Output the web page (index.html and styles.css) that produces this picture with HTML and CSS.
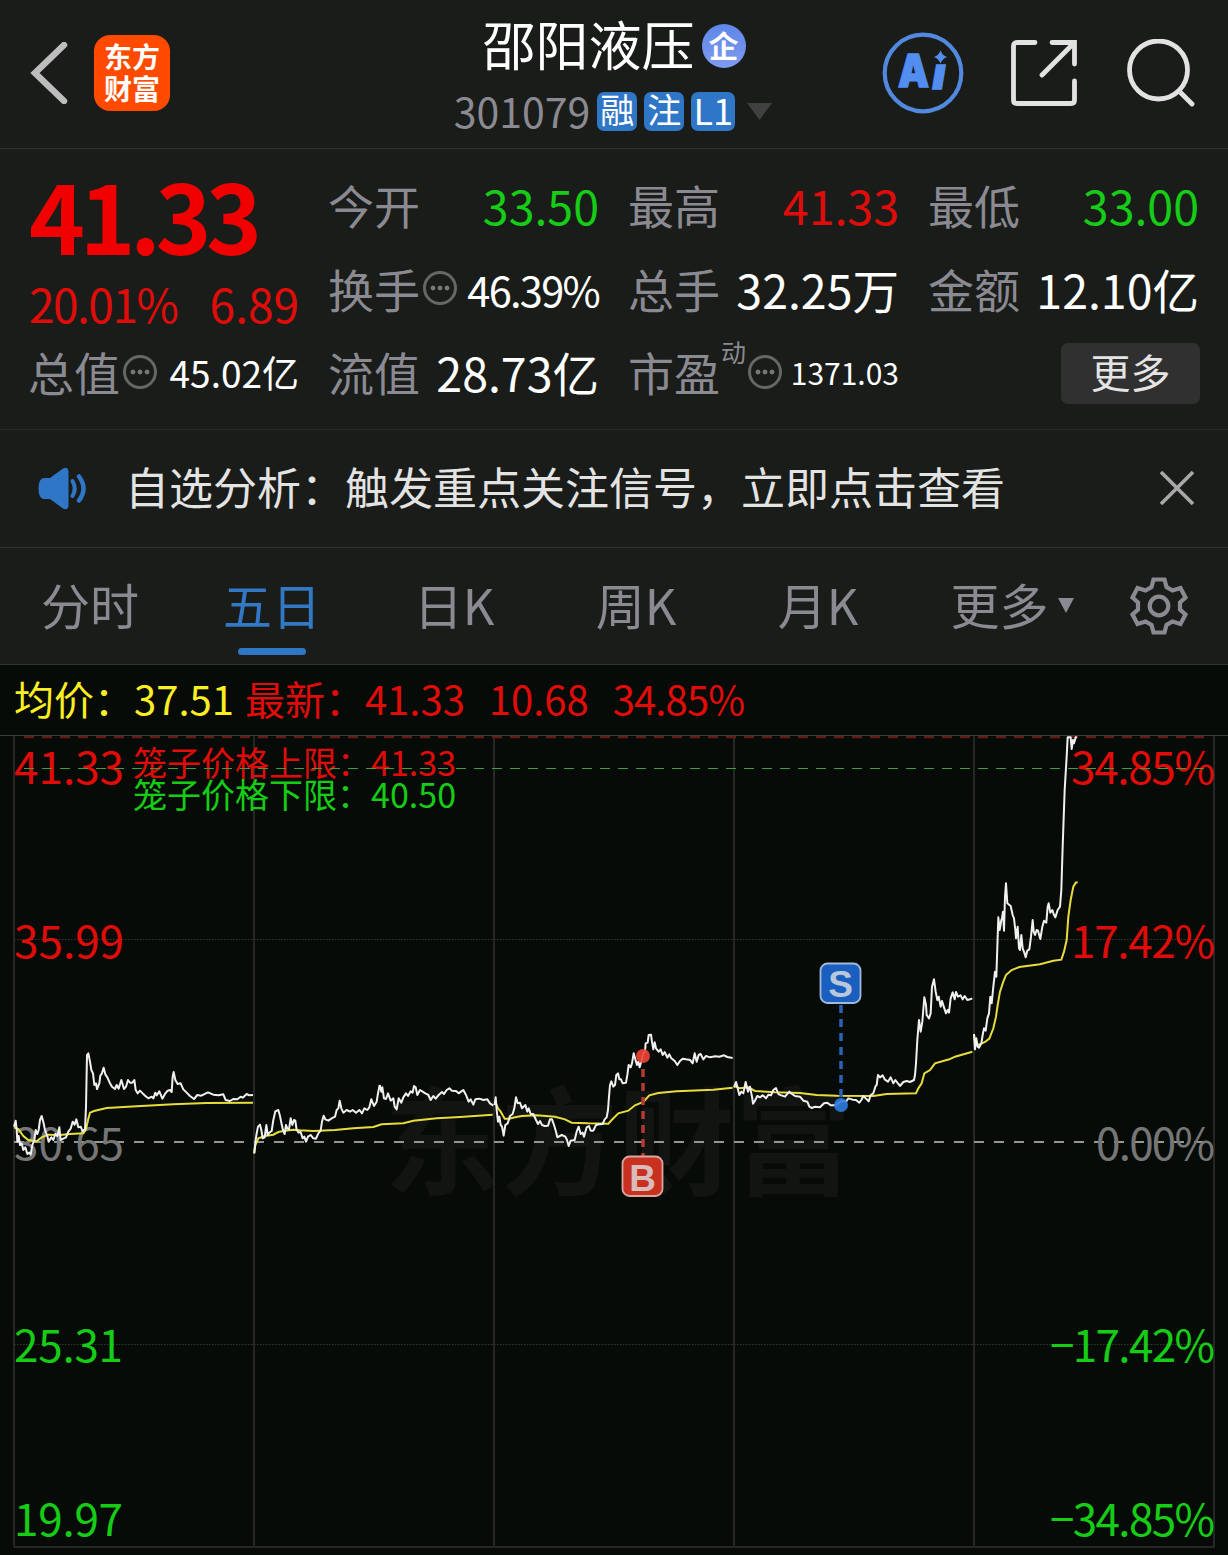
FILE: index.html
```html
<!DOCTYPE html>
<html lang="zh-CN">
<head>
<meta charset="utf-8">
<title>邵阳液压 301079</title>
<link rel="stylesheet" href="styles.css">
</head>
<body>
<header class="header">
  <div class="header-left">
    <svg class="back" width="38" height="62" viewBox="0 0 38 62"><path d="M34 3 5 31l29 28"/></svg>
    <div class="logo"><span>东方</span><span>财富</span></div>
  </div>
  <div class="title">
    <div class="title-name"><span class="name">邵阳液压</span><span class="badge">企</span></div>
    <div class="title-code">
      <span class="code">301079</span><span class="tag">融</span><span class="tag">注</span><span class="tag tag-wide">L1</span>
      <svg class="caret" width="25" height="17" viewBox="0 0 25 17"><path d="M0 0h25L12.500 17z"/></svg>
    </div>
  </div>
  <div class="header-right">
    <svg class="ai" width="82" height="82" viewBox="0 0 82 82">
      <circle cx="41" cy="41" r="38.300"/>
      <text x="16" y="55" textLength="31" lengthAdjust="spacingAndGlyphs">A</text>
      <text x="50.500" y="57" textLength="13" lengthAdjust="spacingAndGlyphs" class="ai-i">ı</text>
      <path d="M58.500 18.500q2 5 6.500 6.500-4.500 1.500-6.500 6.500-2-5-6.500-6.500 4.500-1.500 6.500-6.500z"/>
    </svg>
    <svg class="line-icon share" width="66" height="66" viewBox="0 0 66 66"><path d="M24 2.500H6q-3.500 0-3.500 3.500v54q0 3.500 3.500 3.500h54q3.500 0 3.500-3.500V41M41 2.500h22.500V24M63 3 31 35"/></svg>
    <svg class="line-icon" width="68" height="68" viewBox="0 0 68 68"><circle cx="31.500" cy="31" r="29"/><path d="m52 52 13 13"/></svg>
  </div>
</header>

<section class="quote">
  <div class="price">
    <div class="price-now">41.33</div>
    <div class="price-diff"><span>20.01%</span><span>6.89</span></div>
  </div>
  <div class="cell"><span class="label">今开</span><span class="value down">33.50</span></div>
  <div class="cell"><span class="label">最高</span><span class="value up">41.33</span></div>
  <div class="cell"><span class="label">最低</span><span class="value down">33.00</span></div>
  <div class="cell"><span class="label">换手</span><i class="info"></i><span class="value v-41">46.39%</span></div>
  <div class="cell"><span class="label">总手</span><span class="value">32.25万</span></div>
  <div class="cell"><span class="label">金额</span><span class="value">12.10亿</span></div>
  <div class="cell"><span class="label">总值</span><i class="info"></i><span class="value v-37">45.02亿</span></div>
  <div class="cell"><span class="label">流值</span><span class="value">28.73亿</span></div>
  <div class="cell"><span class="label">市盈</span><sup class="dyn">动</sup><i class="info"></i><span class="value v-30">1371.03</span></div>
  <div class="cell cell-end"><button class="more">更多</button></div>
</section>

<section class="notice">
  <svg width="52" height="44" viewBox="0 0 52 44">
    <path class="horn" d="M6.500 12h6.500L26 2.500q5-2.500 5.500 3v34q-.500 5.500-5.500 3L13 33H6.500q-5-1-5-10.500t5-10.500z"/>
    <path class="wave wave-near" d="M35.500 15q4.500 7.500 0 15"/>
    <path class="wave" d="M42 10.500q9 12 0 24"/>
  </svg>
  <p>自选分析：触发重点关注信号，立即点击查看</p>
  <svg class="close" width="36" height="36" viewBox="0 0 36 36"><path d="m2 2 32 32M34 2 2 34"/></svg>
</section>

<nav class="tabs">
  <a class="tab">分时</a>
  <a class="tab active">五日</a>
  <a class="tab">日K</a>
  <a class="tab">周K</a>
  <a class="tab">月K</a>
  <a class="tab">更多<svg width="16" height="15" viewBox="0 0 16 15"><path d="M0 0h16L8 15z"/></svg></a>
  <svg class="gear" width="60" height="60" viewBox="-30 -30 60 60"><path d="M-5.500-26.500H5.500L7.500-19 13.500-15.500 21.500-18 26.500-8.500 21-3.500V3.500L26.500 8.500 21.500 18 13.500 15.500 7.500 19 5.500 26.500H-5.500L-7.500 19-13.500 15.500-21.500 18-26.500 8.500-21 3.500V-3.500L-26.500-8.500-21.500-18-13.500-15.500-7.500-19z"/><circle r="9.300"/></svg>
</nav>

<div class="legend">
  <span class="avg">均价：37.51</span><span class="latest">最新：41.33</span><span>10.68</span><span class="rate">34.85%</span>
</div>

<svg class="chart" width="1228" height="819" viewBox="0 736 1228 819">
  <text class="watermark" x="384" y="1186" textLength="468">东方财富</text>
  <g class="grid">
    <path d="M14 736V1547M254 736V1547M494 736V1547M734 736V1547M974 736V1547M1214 736V1547M14 1547H1215"/>
    <path class="dotted" d="M14 939.500H1214M14 1344.500H1214"/>
  </g>
  <path class="limit-up" d="M24 737H1204"/>
  <path class="base" d="M14 1142H1214"/>

  <g class="axis">
    <text class="up" x="14" y="783.500" textLength="110">41.33</text>
    <text class="up" x="14" y="957.500" textLength="110">35.99</text>
    <text class="flat" x="14" y="1159.500" textLength="110">30.65</text>
    <text class="down" x="14" y="1362" textLength="109">25.31</text>
    <text class="down" x="14" y="1536" textLength="109">19.97</text>
  </g>
  <g class="axis">
    <text class="up" x="1071" y="783.500" textLength="144">34.85%</text>
    <text class="up" x="1071" y="957.500" textLength="144">17.42%</text>
    <text class="flat" x="1096" y="1159.500" textLength="119">0.00%</text>
    <text class="down" x="1050" y="1362" textLength="165">−17.42%</text>
    <text class="down" x="1050" y="1536" textLength="165">−34.85%</text>
  </g>
  <g class="cage">
    <text class="up" x="133" y="776" textLength="323">笼子价格上限：41.33</text>
    <text class="down" x="133" y="807.500" textLength="323">笼子价格下限：40.50</text>
  </g>
  <path class="cage-line" d="M24 768.500H1204"/>

  <g class="avg-line">
    <polyline transform="translate(0 1030) scale(.33333)" points="42,292 55,297 70,318 85,330 110,334 125,322 145,314 180,315 210,312 250,310 258,298 264,270 270,248 282,243 320,234 410,229 520,223 620,219 759,218"/>
    <polyline transform="translate(0 1030) scale(.33333)" points="762,370 766,345 775,325 795,318 820,314 835,306 850,303 880,299 900,301 940,303 1005,300 1060,295 1120,291 1145,283 1210,280 1240,272 1310,265 1380,261 1478,254"/>
    <polyline transform="translate(380 1010) scale(.33333)" points="346,275 354,295 362,305 374,326 388,326 405,322 425,318 470,316 525,320 555,328 575,338 625,340 685,341 695,330 715,310 745,302 765,286 790,276 808,256 835,249 890,244 1000,239 1058,233"/>
    <polyline transform="translate(720 950) scale(.33333)" points="42,408 60,415 85,412 105,423 165,427 240,429 290,435 350,437 460,438 500,432 588,430 595,415 605,400 613,370 630,360 645,340 688,328 705,320 757,305"/>
    <polyline transform="translate(900 730) scale(.33333)" points="222,912 226,945 240,943 255,936 268,926 280,895 288,860 293,825 300,785 310,755 318,735 335,720 358,711 420,703 460,692 484,689 492,665 500,630 505,560 512,510 520,470 527,458 533,457"/>
  </g>
  <g class="price-line">
    <polyline transform="translate(0 1030) scale(.33333)" points="42,290 47,272 50,300 52,335 56,318 60,345 65,340 70,360 76,352 82,372 88,368 92,374 97,345 103,330 107,300 112,312 116,300 120,270 125,258 131,280 135,300 142,318 146,335 154,322 160,330 166,312 172,318 178,292 182,330 190,326 198,322 205,305 212,296 218,275 224,284 229,268 235,292 242,290 248,304 255,298 258,230 261,75 265,70 270,95 274,120 279,130 283,165 288,160 291,177 298,160 301,137 305,132 311,113 316,133 322,142 330,160 336,170 345,177 350,165 356,176 364,150 372,177 378,170 384,150 390,158 397,158 403,150 407,180 413,190 420,182 428,190 436,198 445,205 455,200 460,205 466,188 470,196 478,184 487,206 495,192 503,182 510,180 515,186 518,140 521,126 526,150 533,162 542,160 550,178 560,188 570,198 582,207 592,195 604,197 624,187 640,194 656,196 670,193 677,210 690,213 700,207 712,208 722,200 728,203 740,192 748,196 759,195"/>
    <polyline transform="translate(0 1030) scale(.33333)" points="763,370 767,330 770,310 774,290 780,284 784,300 788,325 794,322 799,285 803,315 808,308 815,303 820,270 826,244 835,240 840,258 845,283 849,300 854,312 858,285 862,296 867,298 872,265 877,285 882,270 886,272 890,300 896,308 902,306 908,325 913,320 918,335 924,320 932,315 940,325 948,326 955,310 962,302 966,275 971,257 976,268 985,272 995,265 1005,260 1010,240 1015,235 1019,212 1024,235 1030,248 1040,240 1050,245 1058,240 1068,248 1078,240 1086,250 1093,235 1102,240 1108,232 1114,208 1122,228 1130,215 1134,190 1139,165"/>
    <polyline transform="translate(380 1010) scale(.33333)" points="-1,225 4,245 7,232 12,265 18,267 24,250 32,272 40,265 44,290 50,298 56,265 64,278 70,262 78,250 84,258 92,244 98,248 102,228 107,232 112,255 120,240 128,245 136,250 145,255 152,270 160,258 167,266 176,255 186,246 192,252 200,240 208,235 216,242 228,243 236,250 244,244 250,240 258,255 266,275 272,268 280,284 286,268 298,266 310,270 322,268 330,280 340,287"/>
    <polyline transform="translate(380 1010) scale(.33333)" points="344,285 347,262 350,300 354,335 358,320 362,345 366,350 371,377 376,345 383,340 390,318 398,312 403,295 408,262 413,280 420,278 426,295 436,285 442,305 446,295 452,312 460,312 468,330 474,342 480,333 486,345 494,348 504,347 510,328 516,328 522,345 528,365 532,382 545,375 556,380 561,390 566,408 572,392 584,390 590,365 596,350 602,372 608,368 612,380 620,352 627,348 632,362 640,362 648,345 658,343 668,342 674,328 680,322 684,300 687,260 690,225 694,214 700,230 705,225 709,195 714,190 718,208 723,208 728,220 738,218 742,195 746,165 752,172 756,160 761,130 766,148 771,165 775,155 779,172 785,150 790,130 795,125 797,100 803,98 806,75 813,74 816,95 820,118 824,97 828,115 836,125 842,118 848,135 854,126 862,143 868,133 874,145 884,153 892,165 900,153 908,146 918,148 930,150 938,160 944,130 950,155 956,135 962,132 970,148 978,138 990,142 1006,139 1018,140 1032,136 1042,141 1058,144"/>
    <polyline transform="translate(720 950) scale(.33333)" points="42,412 48,396 52,410 58,435 64,425 70,430 77,396 84,425 90,410 96,440 99,461 105,452 112,438 120,442 128,436 138,445 145,434 153,436 160,420 168,414 175,432 184,436 195,440 208,425 216,432 225,438 240,440 250,452 262,455 268,470 276,474 285,470 300,472 312,460 322,458 332,466 345,466 355,460 365,452 378,455 385,445 398,449 408,450 418,458 424,450 430,438 438,446 446,454 452,435 460,430 466,410 470,405 474,375 480,382 488,376 494,388 504,395 512,382 520,400 526,390 532,398 540,408 550,396 560,393 570,396 582,390 585,375 588,340 592,270 597,210 602,245 607,215 613,142 618,165 620,195 627,205 632,190 636,110 642,88 647,125 652,150 656,140 662,170 666,153 672,172 678,190 683,180 687,188 692,145 698,127 704,148 708,126 714,140 722,136 728,148 734,138 742,150 750,148 757,145"/>
    <polyline transform="translate(900 730) scale(.33333)" points="222,912 225,958 229,925 233,950 237,953 244,940 248,915 252,895 257,902 262,865 267,850 271,800 275,820 280,770 285,725 289,740 292,650 295,562 299,600 304,570 306,565 309,545 312,602 315,500 318,460 322,520 332,528 338,555 342,565 346,600 348,625 353,590 357,655 360,660 364,615 368,655 373,668 377,682 382,662 388,658 393,620 398,570 401,605 405,615 410,600 414,602 421,627 427,590 432,572 439,578 443,530 446,520 451,548 457,540 462,555 466,562 473,540 480,530 484,480 488,350 494,180 500,80 503,22 512,22 515,57 519,30 522,40 527,22 531,22"/>
  </g>

  <g class="mark mark-buy">
    <path d="M643 1069V1156"/>
    <circle cx="643" cy="1056" r="7"/>
    <rect x="622.500" y="1156.500" width="40" height="39.500" rx="7"/>
    <text x="642.500" y="1190.500">B</text>
  </g>
  <g class="mark mark-sell">
    <path d="M841 1097V1004"/>
    <circle cx="841" cy="1105" r="7"/>
    <rect x="820.500" y="963.500" width="40" height="39.500" rx="7"/>
    <text x="840.500" y="997">S</text>
  </g>
</svg>
</body>
</html>
```

FILE: styles.css
```css
* { box-sizing: border-box; }

body {
  margin: 0;
  width: 1228px;
  height: 1555px;
  overflow: hidden;
  background: #191c19;
  color: #fff;
  font-family: "Noto Sans CJK SC", sans-serif;
}

svg { display: block; flex: none; }

.up { color: #e00c0a; fill: #e00c0a; }
.down { color: #16cc16; fill: #16cc16; }
.flat { fill: #767676; }

/* header */
.header {
  display: grid;
  grid-template-columns: 440px 1fr 440px;
  height: 149px;
  border-bottom: 1px solid #2e312e;
}
.header-left { display: flex; align-items: center; gap: 26px; padding: 0 0 2px 30px; }
.back path { fill: none; stroke: #bdbdbd; stroke-width: 6.500; stroke-linecap: round; }
.logo {
  display: flex;
  flex-direction: column;
  align-items: center;
  justify-content: center;
  width: 76px;
  height: 76px;
  border-radius: 16px;
  background: #ff4a00;
  font-size: 28px;
  font-weight: 700;
  line-height: 32px;
  padding-bottom: 3px;
}
.title { display: flex; flex-direction: column; align-items: center; padding-right: 2px; white-space: nowrap; }
.title-name {
  display: flex;
  align-items: center;
  gap: 7px;
  height: 88px;
  padding: 2px 0 0 2px;
  font-size: 53px;
  line-height: 76px;
}
.name { margin-bottom: 5px; }
.badge {
  width: 44px;
  height: 44px;
  margin-top: 2px;
  border-radius: 50%;
  background: linear-gradient(#5f86e8, #7e9bef);
  font-size: 30px;
  font-weight: 700;
  line-height: 40px;
  text-align: center;
}
.title-code { display: flex; align-items: center; height: 46px; gap: 7px; }
.code { color: #8b8a92; font-size: 41px; line-height: 44px; margin-bottom: 3px; }
.tag {
  width: 40px;
  height: 39px;
  border-radius: 7px;
  background: #3076c6;
  font-size: 34px;
  line-height: 34px;
  text-align: center;
}
.tag-wide { width: 44px; font-size: 36px; }
.caret { margin-left: 5px; fill: #404040; }
.header-right { display: flex; align-items: center; justify-content: flex-end; padding: 0 33px 2px 0; }
.ai circle { fill: none; stroke: #5289de; stroke-width: 4.200; }
.ai path { fill: #528df0; }
.ai text { fill: #528df0; stroke: #528df0; stroke-width: 1.500; font: 900 46px Inter, sans-serif; }
.ai .ai-i { font-size: 44px; font-style: italic; }
.share { margin: 0 50px 0 47px; }
.line-icon { fill: none; stroke: #e2e2e2; stroke-width: 4.800; stroke-linecap: round; }

/* quote */
.quote {
  display: grid;
  grid-template-columns: repeat(4, 270px);
  grid-template-rows: 84px 83px 84px;
  column-gap: 30px;
  height: 281px;
  padding: 16px 29px 0;
  border-bottom: 1px solid #272a27;
}
.price { grid-row: span 2; color: #e00c0a; }
.price-now {
  height: 104px;
  color: #f00000;
  font-size: 95px;
  font-weight: 700;
  line-height: 98px;
  letter-spacing: -5.500px;
}
.price-diff { display: flex; justify-content: space-between; font-size: 46px; line-height: 68px; }
.price-diff span:first-child { letter-spacing: -1.500px; }
.cell { display: flex; align-items: center; white-space: nowrap; line-height: 80px; }
.label { color: #8b8a92; font-size: 46px; margin: 0 0 6px -1px; }
.value { margin: 0 0 4px auto; font-size: 46.500px; }
.v-41 { font-size: 41.500px; letter-spacing: -1.700px; }
.v-37 { font-size: 37px; }
.v-30 { font-size: 30px; }
.dyn { align-self: flex-start; margin: 3px 0 0 1px; color: #8b8a92; font-size: 25px; line-height: 32px; }
.info {
  width: 34px;
  height: 34px;
  margin: 0 0 5px 3px;
  border: 3px solid #666;
  border-radius: 50%;
  background:
    radial-gradient(circle at 7px 14px, #777 2px, transparent 2.800px),
    radial-gradient(circle at 14px 14px, #777 2px, transparent 2.800px),
    radial-gradient(circle at 21px 14px, #777 2px, transparent 2.800px);
}
.dyn + .info { margin-left: 2px; }
.cell-end { justify-content: flex-end; }
.more {
  width: 139px;
  height: 61px;
  margin: 0 -1px 2px 0;
  padding: 0 0 5px;
  border: 0;
  border-radius: 7px;
  background: #303030;
  color: #e4e4e4;
  font: 40px/54px "Noto Sans CJK SC", sans-serif;
}

/* notice */
.notice {
  display: flex;
  align-items: center;
  height: 118px;
  padding: 0 33px 2px 37px;
  border-bottom: 1px solid #313431;
}
.notice p { margin: 0 auto 4px 36px; color: #e3e3e3; font-size: 44px; white-space: nowrap; }
.horn { fill: #3076c6; }
.wave { fill: none; stroke: #3076c6; stroke-width: 4.500; stroke-linecap: round; }
.wave-near { stroke-width: 4; }
.close { fill: none; stroke: #a8a8a8; stroke-width: 3.600; }

/* tabs */
.tabs {
  display: grid;
  grid-template-columns: repeat(5, 182px) 206px 1fr;
  height: 117px;
  margin-left: -1px;
  border-bottom: 1px solid #313431;
}
.tab {
  display: flex;
  align-items: center;
  justify-content: center;
  gap: 9px;
  height: 112px;
  color: #8b8a92;
  font-size: 49px;
  line-height: 72px;
}
.tab svg { fill: #8b8a92; margin-top: 3px; }
.active { position: relative; color: #3378c4; }
.active::after {
  content: "";
  position: absolute;
  left: 57px;
  bottom: 5px;
  width: 68px;
  height: 7px;
  border-radius: 4px;
  background: #3076c6;
}
.gear { margin: 28px 0 0 14px; fill: none; stroke: #8b8a92; stroke-width: 4.200; }

/* legend */
.legend {
  display: flex;
  height: 71px;
  padding-left: 14px;
  border-bottom: 1px solid #3a3d3a;
  background: #070b08;
  color: #e00c0a;
  font-size: 40px;
  line-height: 66px;
  white-space: nowrap;
}
.legend span { margin-right: 24px; }
.legend .avg { color: #fbee22; margin-right: 11px; }
.legend .rate { letter-spacing: -.900px; }

/* chart */
.chart { background: #070b08; }
.chart path, .chart polyline { fill: none; }
.grid path { stroke: #252725; stroke-width: 2; }
.grid .dotted { stroke: #343734; stroke-width: 1; stroke-dasharray: 1.500 1.500; }
.limit-up { stroke: #651a18; stroke-width: 2.500; stroke-dasharray: 10 8; }
.cage-line { stroke: #3f9d40; stroke-width: 1.200; stroke-dasharray: 10 8; }
.base { stroke: #959595; stroke-width: 2; stroke-dasharray: 10 10; }
.axis { font-size: 44px; }
.cage { font-size: 34px; }
.watermark { fill: #111411; font-size: 117px; font-weight: 700; }
.avg-line { stroke: #e8dc3c; stroke-width: 2; }
.price-line { stroke: #f0f0f0; stroke-width: 2; stroke-linejoin: round; }
.chart polyline { vector-effect: non-scaling-stroke; }
.mark path { stroke-width: 3.500; stroke-dasharray: 8 6; }
.mark rect { stroke-width: 1.800; }
.mark text { font: 700 37px "Liberation Sans", sans-serif; text-anchor: middle; }
.mark-buy path { stroke: #b23a30; }
.mark-buy circle { fill: #ed4434; fill-opacity: .9; }
.mark-buy rect { fill: #c8301f; stroke: #d9a7a1; }
.mark-buy text { fill: #d9bcb9; }
.mark-sell path { stroke: #2963b4; }
.mark-sell circle { fill: #2f7be0; fill-opacity: .9; }
.mark-sell rect { fill: #1a5fc0; stroke: #a3b9d9; }
.mark-sell text { fill: #b9c7dc; }
```
